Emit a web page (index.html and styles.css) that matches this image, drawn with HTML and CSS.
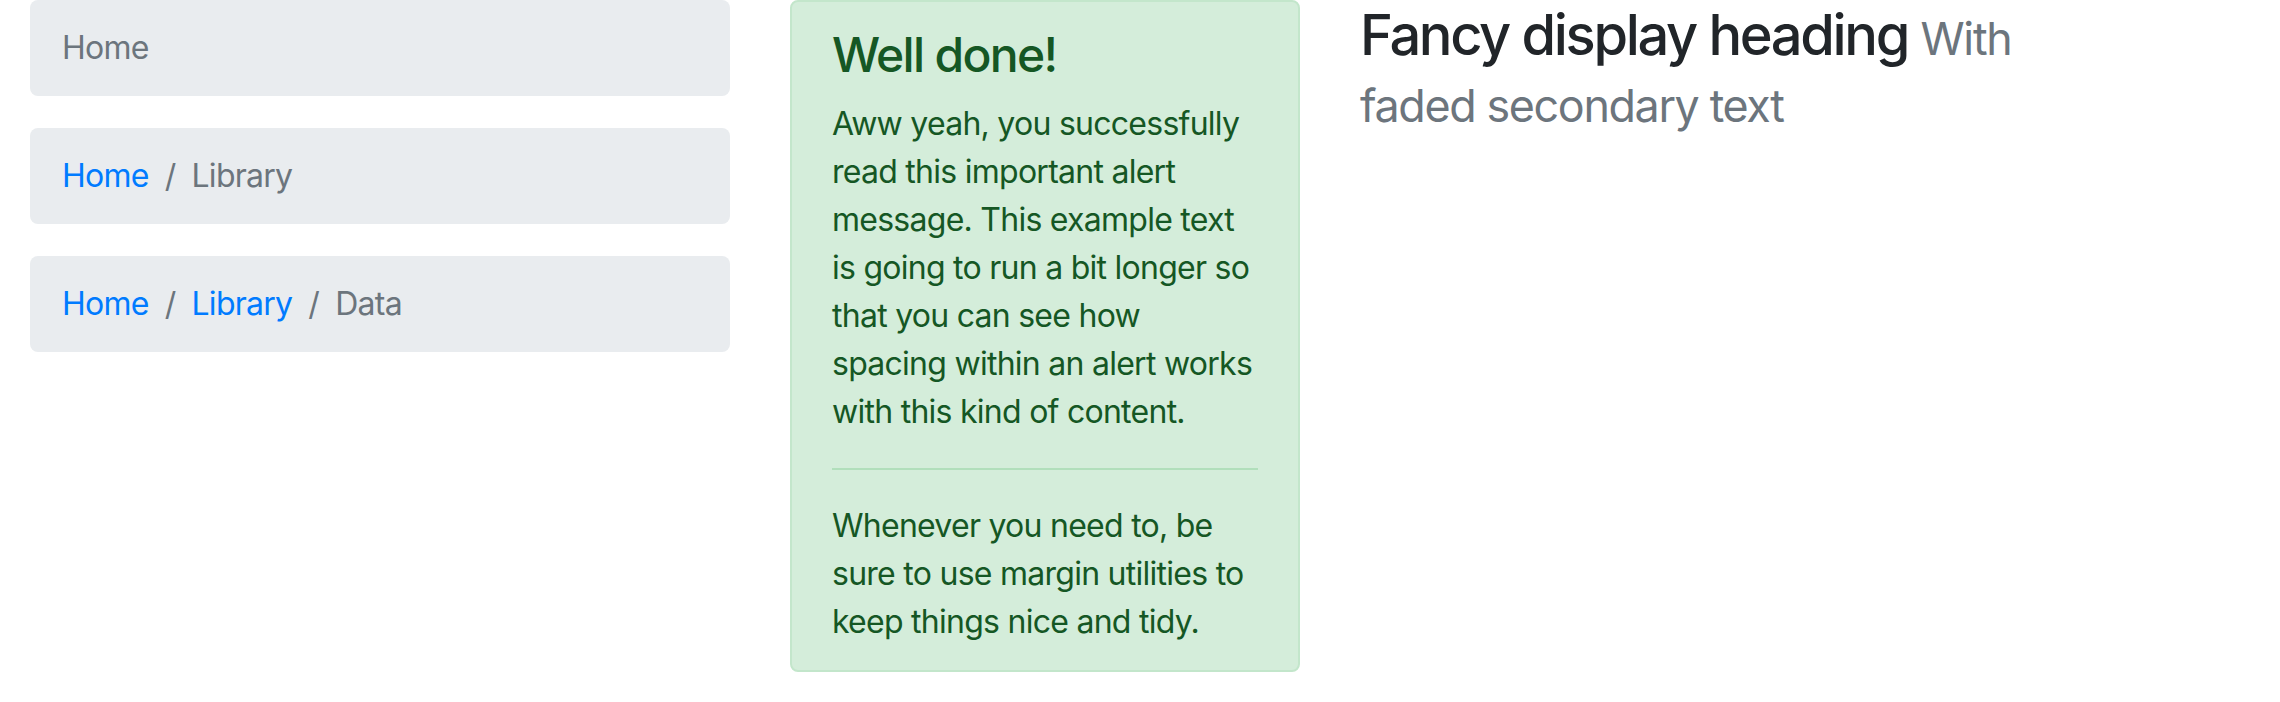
FILE: index.html
```html
<!DOCTYPE html>
<html lang="en">
<head>
<meta charset="utf-8">
<title>Breadcrumbs, alert and heading</title>
<link rel="stylesheet" href="styles.css">
</head>
<body>
<div class="row">
  <div class="col col-crumbs">
    <nav class="breadcrumb">
      <span class="crumb active">Home</span>
    </nav>
    <nav class="breadcrumb">
      <a class="crumb" href="#">Home</a>
      <span class="crumb active">Library</span>
    </nav>
    <nav class="breadcrumb">
      <a class="crumb" href="#">Home</a>
      <a class="crumb" href="#">Library</a>
      <span class="crumb active">Data</span>
    </nav>
  </div>
  <div class="col col-alert">
    <div class="alert">
      <h4 class="alert-heading">Well done!</h4>
      <p class="alert-text">Aww yeah, you successfully read this important alert message. This example text is going to run a bit longer so that you can see how spacing within an alert works with this kind of content.</p>
      <hr class="alert-rule">
      <p class="alert-text last">Whenever you need to, be sure to use margin utilities to keep things nice and tidy.</p>
    </div>
  </div>
  <div class="col col-heading">
    <h3 class="display-heading">Fancy display heading <small class="muted">With </small><small class="muted">faded secondary text</small></h3>
  </div>
</div>
</body>
</html>
```
FILE: styles.css
```css
* { box-sizing: border-box; }
html, body { margin: 0; padding: 0; background: #fff; }
body {
  font-family: Inter, "Liberation Sans", Arial, sans-serif;
  font-size: 32px;
  line-height: 1.5;
  letter-spacing: -0.023em;
  color: #212529;
}
.row { display: grid; grid-template-columns: 760px 570px 760px; align-items: start; }
.col { padding: 0 30px; }

.breadcrumb {
  display: flex;
  flex-wrap: wrap;
  background: #e9ecef;
  border-radius: 8px;
  padding: 24px 32px;
  margin-bottom: 32px;
}
.crumb { color: #007bff; text-decoration: none; }
.crumb.active { color: #6c757d; }
.crumb + .crumb::before {
  content: "/";
  color: #6c757d;
  padding: 0 16px;
  display: inline-block;
}

.alert {
  background: #d4edda;
  border: 2px solid #c3e6cb;
  border-radius: 8px;
  color: #155724;
  padding: 24px 40px;
}
.alert-heading {
  margin: 0 0 16px;
  font-size: 48px;
  font-weight: 500;
  line-height: 1.2;
  letter-spacing: -0.035em;
  color: inherit;
}
.alert-text { margin: 0 0 32px; }
.alert-text.last { margin-bottom: 0; }
.alert-rule {
  margin: 32px 0;
  border: 0;
  border-top: 2px solid #b1dfbb;
  height: 0;
}

.display-heading {
  margin: 0;
  padding-top: 2px;
  font-size: 56px;
  font-weight: 500;
  line-height: 1.2;
  letter-spacing: -0.042em;
  color: #212529;
}
.muted { font-size: 80%; font-weight: 400; color: #6c757d; letter-spacing: -0.03em; }
```
